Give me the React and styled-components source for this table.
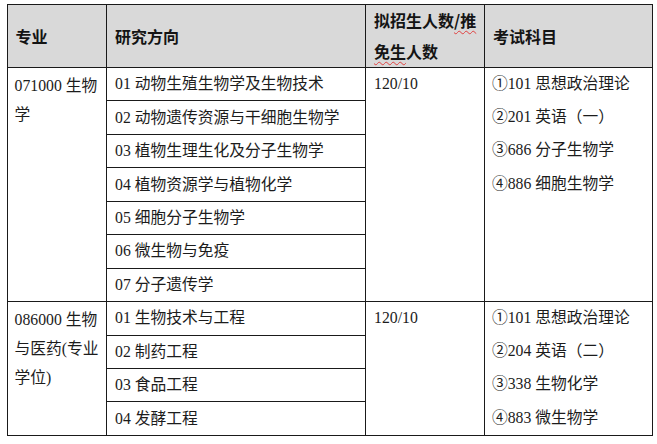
import React from "react";
import styled, { createGlobalStyle } from "styled-components";

const Global = createGlobalStyle`
  html, body { margin: 0; padding: 0; background: #fff; }
  body { font-family: "Liberation Serif", "Noto Sans CJK SC", serif; }
`;

const Page = styled.div`
  padding: 4px 0 0 6.5px;
`;

const Table = styled.table`
  border-collapse: collapse;
  table-layout: fixed;
  width: 645px;
  font-family: "Liberation Serif", "Noto Sans CJK SC", serif;
  font-size: 15.75px;
  color: #1c1c1c;
`;

const HeadCell = styled.th`
  background: #d9d9d9;
  border: 1px solid #1a1a1a;
  height: 62px;
  padding: 0 0 0 8px;
  text-align: left;
  vertical-align: middle;
  font-family: "Noto Sans CJK SC", sans-serif;
  font-weight: 700;
  font-size: 16px;
  line-height: 31px;
  color: #141414;
`;

const Cell = styled.td`
  border: 1px solid #1a1a1a;
  height: 32.45px;
  padding: ${(p) => p.$pad || "0 0 0 8px"};
  vertical-align: ${(p) => p.$va || "middle"};
  line-height: ${(p) => p.$lh || "22px"};
  text-align: left;
  white-space: ${(p) => (p.$wrap ? "normal" : "nowrap")};
  word-break: break-all;
`;

const Spell = styled.span`
  text-decoration: underline wavy #e04040;
  text-decoration-thickness: 1px;
  text-underline-offset: 3px;
`;

const Line = styled.div`
  height: 33.2px;
  line-height: 31px;
  white-space: nowrap;
`;

const groups = [
  {
    major: "071000 生物学",
    dirs: [
      "01 动物生殖生物学及生物技术",
      "02 动物遗传资源与干细胞生物学",
      "03 植物生理生化及分子生物学",
      "04 植物资源学与植物化学",
      "05 细胞分子生物学",
      "06 微生物与免疫",
      "07 分子遗传学",
    ],
    num: "120/10",
    exams: ["①101 思想政治理论", "②201 英语（一）", "③686 分子生物学", "④886 细胞生物学"],
  },
  {
    major: "086000 生物与医药(专业学位)",
    dirs: ["01 生物技术与工程", "02 制药工程", "03 食品工程", "04 发酵工程"],
    num: "120/10",
    exams: ["①101 思想政治理论", "②204 英语（二）", "③338 生物化学", "④883 微生物学"],
  },
];

export default function App() {
  return (
    <Page>
      <Global />
      <Table>
        <colgroup>
          <col style={{ width: 99.5 }} />
          <col style={{ width: 259 }} />
          <col style={{ width: 119 }} />
          <col style={{ width: 167.5 }} />
        </colgroup>
        <thead>
          <tr>
            <HeadCell>专业</HeadCell>
            <HeadCell>研究方向</HeadCell>
            <HeadCell>
              拟招生人数<Spell>/推</Spell>
              <br />
              <Spell>免生</Spell>人数
            </HeadCell>
            <HeadCell>考试科目</HeadCell>
          </tr>
        </thead>
        <tbody>
          {groups.map((g) =>
            g.dirs.map((d, i) => (
              <tr key={g.major + i}>
                {i === 0 && (
                  <Cell
                    rowSpan={g.dirs.length}
                    $va="top"
                    $lh="29px"
                    $pad="3px 4px 0 7px"
                    $wrap
                  >
                    {g.major}
                  </Cell>
                )}
                <Cell>{d}</Cell>
                {i === 0 && (
                  <Cell rowSpan={g.dirs.length} $va="top" $pad="0 0 0 8px" $lh="31px">
                    {g.num}
                  </Cell>
                )}
                {i === 0 && (
                  <Cell rowSpan={g.dirs.length} $va="top" $pad="0 0 0 7px">
                    {g.exams.map((e) => (
                      <Line key={e}>{e}</Line>
                    ))}
                  </Cell>
                )}
              </tr>
            ))
          )}
        </tbody>
      </Table>
    </Page>
  );
}
